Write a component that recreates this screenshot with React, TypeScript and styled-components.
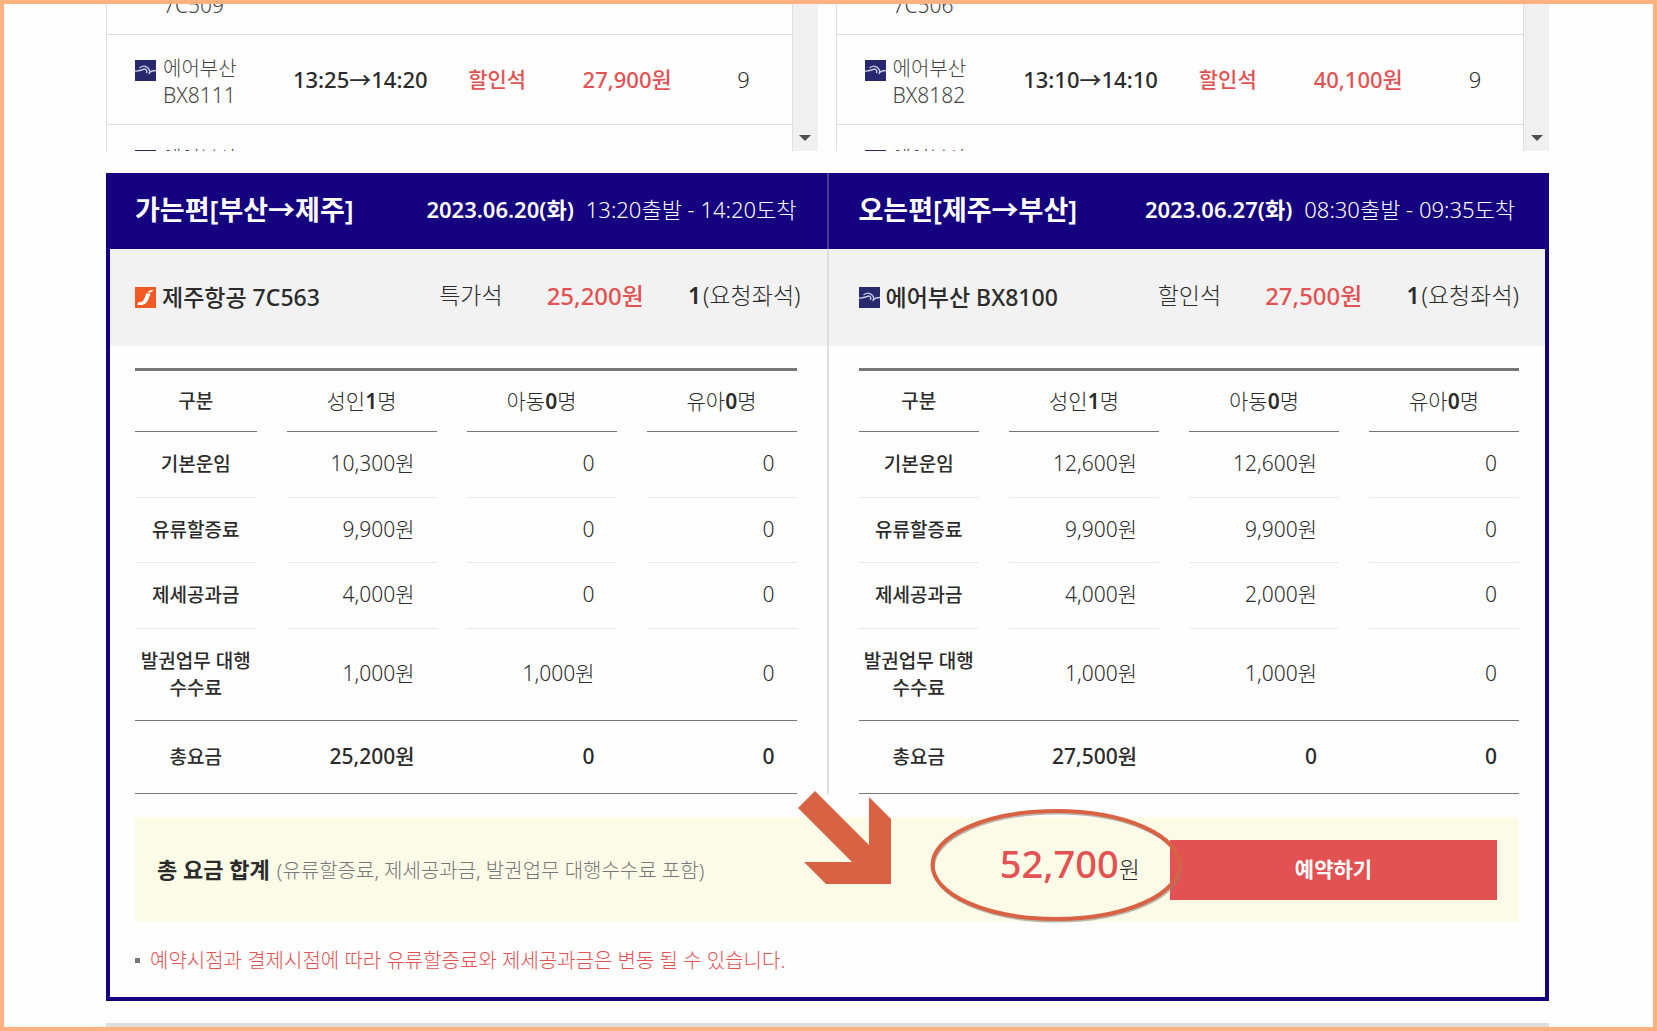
import React from 'react';
import styled, { createGlobalStyle } from 'styled-components';

const NAVY = '#15007f';
const RED = '#e35253';
const INK = '#2b2b2b';

const GlobalStyle = createGlobalStyle`
  *, *::before, *::after { box-sizing: border-box; }
  body {
    margin: 0;
    background: #fefefe;
    color: ${INK};
    font-family: "Noto Sans", "Noto Sans CJK KR", sans-serif;
    font-size: 20px;
    font-weight: 300;
    line-height: 27px;
  }
  h2, h3, p { margin: 0; font-weight: inherit; }
  table { border-collapse: separate; border-spacing: 0; table-layout: fixed; width: 100%; }
  th, td { padding: 0; font-weight: inherit; }
`;

const Frame = styled.main`
  min-height: 100vh;
  padding: 0 104px 0 102px;
  border: 4px solid #ffb27f;
`;

const Lists = styled.div`
  display: grid;
  grid-template-columns: calc(50% - 10px) 1fr;
  gap: 18px;
`;

const ListBox = styled.section`
  display: flex;
  height: 147px;
  overflow: hidden;
`;

const ListView = styled.div`
  flex: 1;
  border: solid #dedede;
  border-width: 0 1px;
`;

const FlightTable = styled.table`
  margin-top: -59px;

  td {
    height: 90px;
    border-bottom: 1px solid #dedede;
    text-align: center;
    white-space: nowrap;
  }
`;

const Carrier = styled.div`
  display: flex;
  gap: 7px;
  padding: 5px 0 0 28px;
  text-align: left;
  color: #444;

  svg { margin-top: 5px; }
`;

const Code = styled.div`
  font-size: 21px;
`;

const Medium = styled.span<{ $red?: boolean; $size?: number }>`
  font-size: ${(p) => p.$size ?? 22}px;
  font-weight: 500;
  color: ${(p) => (p.$red ? RED : INK)};
`;

const Seats = styled.span`
  font-size: 22px;
`;

const Scrollbar = styled.div`
  display: flex;
  align-items: flex-end;
  justify-content: center;
  width: 25px;
  padding-bottom: 10px;
  background: #f0f0f0;
`;

const Panel = styled.section`
  margin-top: 22px;
  border: 4px solid ${NAVY};
  border-top: 0;
`;

const Legs = styled.div`
  display: grid;
  grid-template-columns: calc(50% - 1px) 1fr;
`;

const Leg = styled.article<{ $second?: boolean }>`
  --left: ${(p) => (p.$second ? '30px' : '25px')};
  --right: ${(p) => (p.$second ? '26px' : '30px')};
  --rule: ${(p) => (p.$second ? '2px' : '0')};
`;

const LegHeader = styled.header`
  display: flex;
  align-items: center;
  justify-content: space-between;
  height: 76px;
  padding: 0 30px 4px var(--left);
  border-left: var(--rule) solid #4a3a9b;
  background: ${NAVY};
  color: #fff;
  font-size: 22px;
  white-space: nowrap;
`;

const LegTitle = styled.h2`
  font-size: 27px;
  font-weight: 600;
`;

const When = styled.p`
  display: flex;
  gap: 12px;

  strong { font-weight: 600; }
`;

const Chosen = styled.div`
  display: flex;
  align-items: center;
  justify-content: space-between;
  height: 97px;
  padding: 0 26px 0 var(--left);
  border-left: var(--rule) solid #dedede;
  background: #f2f2f2;
  font-size: 23px;
  white-space: nowrap;
`;

const ChosenName = styled.h3`
  display: flex;
  align-items: center;
  gap: 6px;
  font-size: 23px;
  font-weight: 500;
`;

const ChosenFacts = styled.div`
  display: flex;
  gap: 44px;
  padding-bottom: 4px;

  strong { margin-right: 2px; font-weight: 600; }
`;

const FareWrap = styled.div`
  padding: 22px var(--right) 0 var(--left);
  border-left: var(--rule) solid #dedede;
`;

const FareTable = styled.table`
  border-top: 3px solid #777;
`;

const Cell = styled.div<{ $dark?: boolean; $right?: boolean; $h: number }>`
  display: flex;
  align-items: center;
  justify-content: ${(p) => (p.$right ? 'flex-end' : 'center')};
  height: ${(p) => p.$h}px;
  padding-right: ${(p) => (p.$right ? 22 : 0)}px;
  padding-bottom: ${(p) => (p.$right ? 2 : 0)}px;
  border-bottom: ${(p) => (p.$dark ? '1px solid #777' : '1px solid #e8e8e8')};
  text-align: center;

  strong { font-weight: 600; }
`;

const FareRow = styled.tr<{ $solid?: boolean; $total?: boolean }>`
  font-size: 21px;
  font-weight: ${(p) => (p.$total ? 500 : 300)};

  th { font-size: 19px; font-weight: 500; }
  thead & th { font-size: 21px; font-weight: 300; }
  thead & th:first-child { font-size: 19px; font-weight: 500; }
  th + th, td { padding-left: ${(p) => (p.$solid ? 0 : 30)}px; }
`;

const Total = styled.div`
  display: flex;
  align-items: center;
  margin: 23px 26px 0 25px;
  padding: 22px;
  height: 105px;
  background: #fcfbe7;
  white-space: nowrap;
`;

const TotalLabel = styled.p`
  flex: 1;
  color: #777;

  strong { margin-right: 2px; color: ${INK}; font-size: 22px; font-weight: 600; }
`;

const TotalPrice = styled.div`
  position: relative;
  margin-right: 30px;
  padding-bottom: 6px;
  font-size: 23px;

  strong { color: ${RED}; font-size: 38px; font-weight: 500; }
`;

const Marks = styled.svg`
  position: absolute;
  z-index: 1;
  right: -44px;
  top: 50%;
  margin-top: -80px;
  pointer-events: none;
`;

const Reserve = styled.button`
  width: 327px;
  height: 60px;
  border: 0;
  background: ${RED};
  color: #fff;
  font: 700 21px/27px "Noto Sans", "Noto Sans CJK KR", sans-serif;
`;

const Notice = styled.p`
  display: flex;
  align-items: center;
  gap: 10px;
  height: 75px;
  padding: 2px 0 0 25px;
  color: ${RED};

  &::before {
    content: "";
    width: 5px;
    height: 5px;
    background: #777;
  }
`;

const NextSection = styled.div`
  height: 4px;
  margin-top: 22px;
  background: #dedede;
`;

const BusanLogo = () => (
  <svg width="21" height="21" viewBox="0 0 21 21" aria-hidden="true">
    <rect width="21" height="21" fill="#28286f" />
    <g fill="none" stroke="#c9cbe2" strokeLinecap="round" strokeLinejoin="round">
      <path d="M0 11C3 11.500 5 10.500 8 9.500" strokeWidth="1.400" />
      <path d="M5 7.500C8 5.500 11 6 13 8C14.500 9.500 15.500 11.500 14 13.500" strokeWidth="1.400" />
      <path d="M8 9.500C10.500 8 12.500 10.500 11.500 12.500M14.500 12.500C16.500 10.500 18.500 10.500 21 10.500" strokeWidth="1.400" />
    </g>
  </svg>
);

const JejuLogo = () => (
  <svg width="21" height="21" viewBox="0 0 21 21" aria-hidden="true">
    <rect width="21" height="21" fill="#f15a22" />
    <path d="M12.500 5.500C13.500 3.500 15.500 3 18.500 3C17.500 4.500 16 5.200 14.500 5.500Z" fill="#fff" />
    <path d="M11 6.500H15.500C14.500 9 14 11.500 12.500 14C10.500 17.500 7 18.500 2.500 18C2.500 16.500 3 15.500 4 15.200C8 15.500 9.500 12.500 11 6.500Z" fill="#fff" />
  </svg>
);

const DownArrow = () => (
  <svg width="12" height="6" viewBox="0 0 12 6" aria-hidden="true">
    <path d="M0 0H12L6 6Z" fill="#505050" />
  </svg>
);

type Flight = { jeju?: boolean; name: string; code: string; time?: string; seat?: string; price?: string; left?: string };

const FlightList = ({ flights }: { flights: Flight[] }) => (
  <ListBox>
    <ListView>
      <FlightTable>
        <colgroup>
          <col style={{ width: '24%' }} />
          <col style={{ width: '26%' }} />
          <col style={{ width: '14%' }} />
          <col style={{ width: '24%' }} />
          <col style={{ width: '10%' }} />
          <col />
        </colgroup>
        <tbody>
          {flights.map((f, i) => (
            <tr key={i}>
              <td>
                <Carrier>
                  {f.jeju ? <JejuLogo /> : <BusanLogo />}
                  <div>{f.name}<Code>{f.code}</Code></div>
                </Carrier>
              </td>
              <td><Medium>{f.time}</Medium></td>
              <td><Medium $red $size={21}>{f.seat}</Medium></td>
              <td><Medium $red>{f.price}</Medium></td>
              <td><Seats>{f.left}</Seats></td>
              <td />
            </tr>
          ))}
        </tbody>
      </FlightTable>
    </ListView>
    <Scrollbar><DownArrow /></Scrollbar>
  </ListBox>
);

type LegData = {
  second?: boolean; title: string; date: string; time: string; flight: string;
  seat: string; price: string; fares: string[][]; total: string[];
};

const LegCard = ({ leg }: { leg: LegData }) => (
  <Leg $second={leg.second}>
    <LegHeader>
      <LegTitle>{leg.title}</LegTitle>
      <When><strong>{leg.date}</strong><span>{leg.time}</span></When>
    </LegHeader>
    <Chosen>
      <ChosenName>{leg.second ? <BusanLogo /> : <JejuLogo />}{leg.flight}</ChosenName>
      <ChosenFacts>
        <span>{leg.seat}</span>
        <Medium $red $size={24}>{leg.price}</Medium>
        <span><strong>1</strong>(요청좌석)</span>
      </ChosenFacts>
    </Chosen>
    <FareWrap>
      <FareTable>
        <colgroup>
          <col />
          <col style={{ width: 180 }} />
          <col style={{ width: 180 }} />
          <col style={{ width: 180 }} />
        </colgroup>
        <thead>
          <FareRow>
            <th scope="col"><Cell $h={61} $dark>구분</Cell></th>
            {[['성인', '1'], ['아동', '0'], ['유아', '0']].map(([who, n]) => (
              <th scope="col" key={who}><Cell $h={61} $dark>{who}<strong>{n}</strong>명</Cell></th>
            ))}
          </FareRow>
        </thead>
        <tbody>
          {leg.fares.map(([label, ...values], i) => {
            const last = i === leg.fares.length - 1;
            const h = last ? 92 : i === 1 ? 65 : 66;
            return (
              <FareRow key={label} $solid={last}>
                <th scope="row"><Cell $h={h} $dark={last}>{label}</Cell></th>
                {values.map((v, k) => <td key={k}><Cell $h={h} $right $dark={last}>{v}</Cell></td>)}
              </FareRow>
            );
          })}
          <FareRow $solid $total>
            <th scope="row"><Cell $h={73} $dark>총요금</Cell></th>
            {leg.total.map((v, k) => <td key={k}><Cell $h={73} $right $dark>{v}</Cell></td>)}
          </FareRow>
        </tbody>
      </FareTable>
    </FareWrap>
  </Leg>
);

const outbound: Flight[] = [
  { jeju: true, name: '제주항공', code: '7C509' },
  { name: '에어부산', code: 'BX8111', time: '13:25→14:20', seat: '할인석', price: '27,900원', left: '9' },
  { name: '에어부산', code: '\u00a0' },
];

const inbound: Flight[] = [
  { jeju: true, name: '제주항공', code: '7C506' },
  { name: '에어부산', code: 'BX8182', time: '13:10→14:10', seat: '할인석', price: '40,100원', left: '9' },
  { name: '에어부산', code: '\u00a0' },
];

const legs: LegData[] = [
  {
    title: '가는편[부산→제주]', date: '2023.06.20(화)', time: '13:20출발 - 14:20도착',
    flight: '제주항공 7C563', seat: '특가석', price: '25,200원',
    fares: [
      ['기본운임', '10,300원', '0', '0'],
      ['유류할증료', '9,900원', '0', '0'],
      ['제세공과금', '4,000원', '0', '0'],
      ['발권업무 대행 수수료', '1,000원', '1,000원', '0'],
    ],
    total: ['25,200원', '0', '0'],
  },
  {
    second: true,
    title: '오는편[제주→부산]', date: '2023.06.27(화)', time: '08:30출발 - 09:35도착',
    flight: '에어부산 BX8100', seat: '할인석', price: '27,500원',
    fares: [
      ['기본운임', '12,600원', '12,600원', '0'],
      ['유류할증료', '9,900원', '9,900원', '0'],
      ['제세공과금', '4,000원', '2,000원', '0'],
      ['발권업무 대행 수수료', '1,000원', '1,000원', '0'],
    ],
    total: ['27,500원', '0', '0'],
  },
];

export default function App() {
  return (
    <Frame>
      <GlobalStyle />
      <Lists>
        <FlightList flights={outbound} />
        <FlightList flights={inbound} />
      </Lists>
      <Panel>
        <Legs>
          {legs.map((leg) => <LegCard key={leg.title} leg={leg} />)}
        </Legs>
        <Total>
          <TotalLabel>
            <strong>총 요금 합계</strong> (유류할증료, 제세공과금, 발권업무 대행수수료 포함)
          </TotalLabel>
          <TotalPrice>
            <strong>52,700</strong>원
            <Marks width="390" height="136" viewBox="0 0 390 136" aria-hidden="true">
              <path d="M4 18L21 1L75 55V7L97 29V94H32L10 72H58Z" fill="#d96244" />
              <ellipse cx="263" cy="77" rx="123.500" ry="54" fill="none" stroke="#8a8a80" strokeOpacity="0.600" strokeWidth="3" />
              <ellipse cx="262" cy="75" rx="123.500" ry="54" fill="none" stroke="#d96244" strokeWidth="4" />
            </Marks>
          </TotalPrice>
          <Reserve type="button">예약하기</Reserve>
        </Total>
        <Notice>예약시점과 결제시점에 따라 유류할증료와 제세공과금은 변동 될 수 있습니다.</Notice>
      </Panel>
      <NextSection />
    </Frame>
  );
}
